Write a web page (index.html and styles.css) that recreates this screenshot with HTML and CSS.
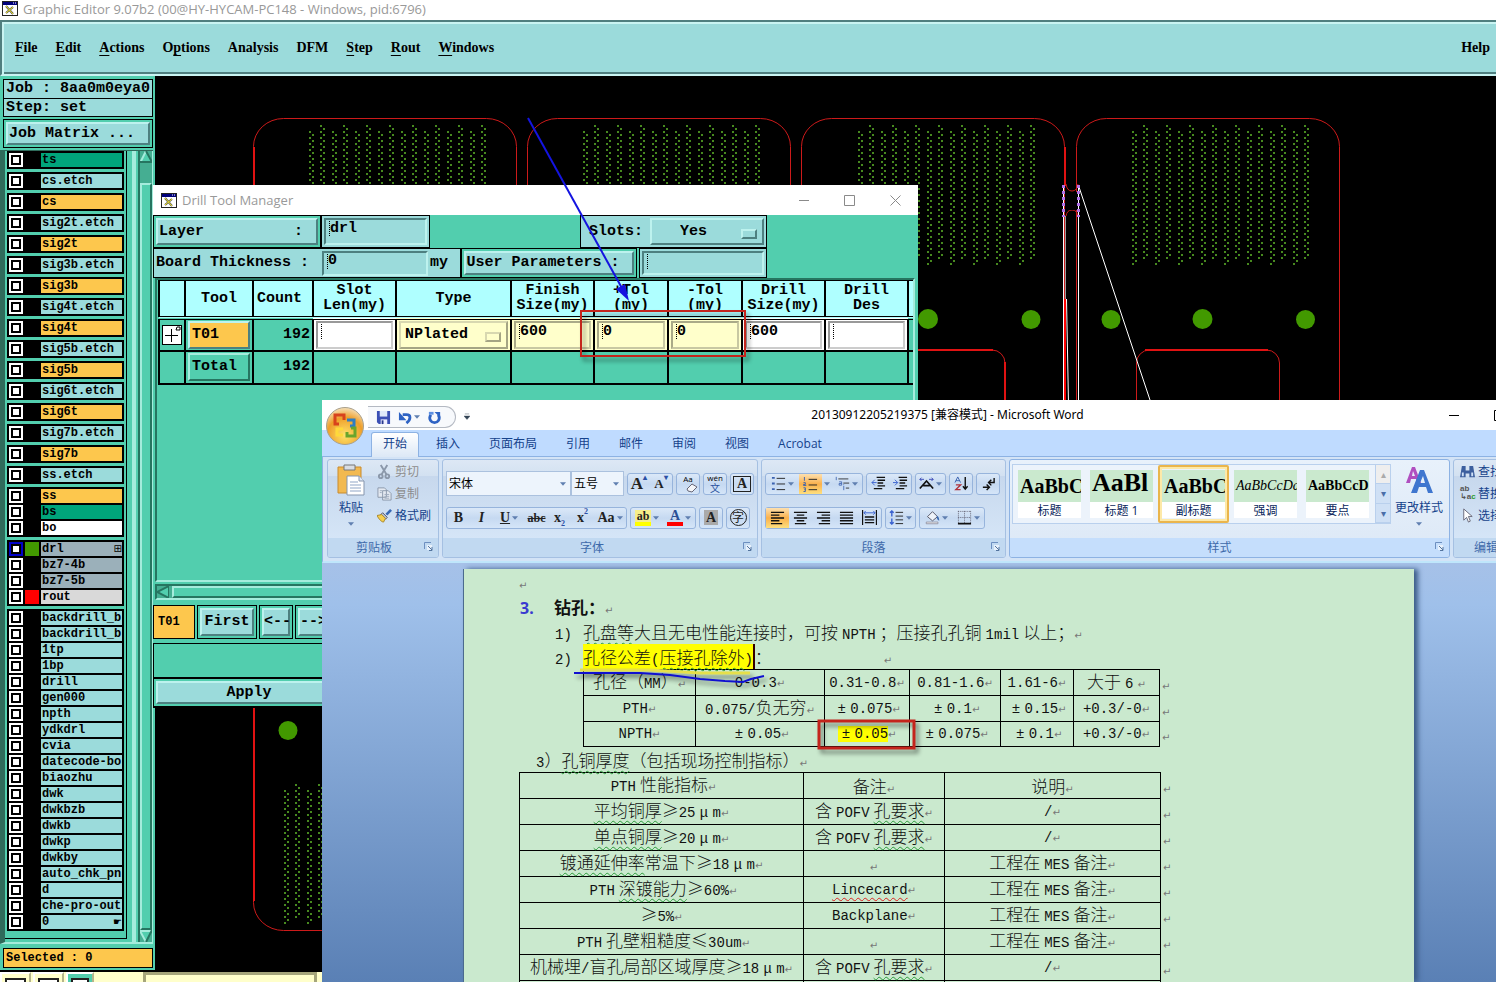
FILE: index.html
```html
<!DOCTYPE html>
<html lang="zh-CN">
<head>
  <meta charset="UTF-8" />
  <meta name="viewport" content="width=device-width, initial-scale=1.0" />
  <title>Graphic Editor</title>
  <link rel="stylesheet" href="styles.css">
</head>
<body>
  <!-- shared icons -->
  <svg class="defs" aria-hidden="true">
    <symbol id="x-icon" viewBox="0 0 16 15"><path d="M0 0h16v15H0z" fill="#222"/><path d="M1 4h14v10H1z" fill="#fff"/><path d="M1 1h14v3H1z" fill="#00007b"/><path d="M11 2h1M13 2h1" stroke="#fff"/><path d="M4 5l7 8M11 6l-7 6" stroke="#555" stroke-width="2"/><path d="M4 5l7 8M11 6l-7 6" stroke="#f5e926"/></symbol>
    <symbol id="down" viewBox="0 0 7 4"><path d="M0 0h7L3.500 4z" fill="#5f7fb0"/></symbol>
    <symbol id="launch" viewBox="0 0 9 9"><path d="M.5 7V.5H7" fill="none" stroke="#6d8fc0"/><path d="M3 3h5v5H3z" fill="#e8f1fc"/><path d="M4 4l4 4M8 5v3.500H5" fill="none" stroke="#54759f"/></symbol>
    <symbol id="save" viewBox="0 0 16 16"><path d="M1 1h14v14H3l-2-2z" fill="#3b4fb5"/><path d="M4 1h8v6H4z" fill="#dfe8fa"/><path d="M5 10h7v5H5z" fill="#eef"/><path d="M6 11h2v4H6z" fill="#28388c"/></symbol>
    <symbol id="undo" viewBox="0 0 16 16"><path d="M5 5h4c5 0 5 5 0 9" fill="none" stroke="#2e63c4" stroke-width="3"/><path d="M1 2v9h8z" fill="#2e63c4"/></symbol>
    <symbol id="redo" viewBox="0 0 16 16"><path d="M4 5C1 10 5 13.500 8 13.500s7-3.500 4-8.500" fill="none" stroke="#2e63c4" stroke-width="3"/><path d="M8 2h6v6z" fill="#2e63c4"/><path d="M2 2h5v3H2z" fill="#5d8fe0"/></symbol>
    <symbol id="paste" viewBox="0 0 28 32"><path d="M1 3h23v26H1z" fill="#f2b950" stroke="#c98a2c"/><path d="M7 1h11v5H7z" fill="#d9dde3" stroke="#777"/><path d="M10 12h12l5 5v14H10z" fill="#fff" stroke="#8595ad"/><path d="M22 12v5h5" fill="#dce6f4" stroke="#8595ad"/><path d="M13 18h8M13 21h11M13 24h11M13 27h11" stroke="#8fa5c6"/></symbol>
    <symbol id="cut" viewBox="0 0 16 16"><path d="M4 1l6 10M11 1L5 11" stroke="#8b98aa" stroke-width="2"/><circle cx="4" cy="13" r="2" fill="none" stroke="#8b98aa" stroke-width="2"/><circle cx="11" cy="13" r="2" fill="none" stroke="#8b98aa" stroke-width="2"/></symbol>
    <symbol id="copy" viewBox="0 0 16 16"><path d="M1 2h7l2 2v8H1zM6 5h6l3 3v7H6z" fill="#e4e9f1" stroke="#8b98aa"/><path d="M8 9h5M8 11h5M8 13h5M3 5h3M3 7h2" stroke="#9eabbd"/></symbol>
    <symbol id="brush" viewBox="0 0 16 16"><path d="M9 6l5-5 2 2-5 5z" fill="#3769b5"/><path d="M6 5l5 5-2 2-5-5z" fill="#b6c3d6" stroke="#556"/><path d="M0 8l5-1 4 4-2 4c-2 0-5-3-7-7z" fill="#f5cf4e" stroke="#a8862a"/></symbol>
    <symbol id="eraser" viewBox="0 0 12 10"><path d="M1 6l5-5 5 3-5 5-4-1z" fill="#f3f5f8" stroke="#667"/></symbol>
    <symbol id="bullets" viewBox="0 0 16 16"><path d="M1 2h3M1 8h3M1 14h3" stroke="#3b62b0" stroke-width="2"/><path d="M6 2.500h9M6 8.500h9M6 14.500h9" stroke="#222"/></symbol>
    <symbol id="numbers" viewBox="0 0 16 16"><path d="M1.500 0v4M.5 6h2v2h-2v1h3M.5 11.500h2v2h-1M2.500 13v2.500h-2" fill="none" stroke="#3b62b0"/><path d="M6 2.500h9M6 8.500h9M6 13.500h9" stroke="#222"/></symbol>
    <symbol id="multi" viewBox="0 0 18 16"><path d="M1.500 0v4M5 6h3v4H5V8h3M10.500 11v5M10 9.500h1" fill="none" stroke="#3b62b0"/><path d="M4 2.500h12M10 7.500h7M13 13.500h4" stroke="#222"/></symbol>
    <symbol id="outdent" viewBox="0 0 16 16"><path d="M6 1.500h9M7 4.500h8M7 7.500h6M7 10.500h8M3 13.500h9" stroke="#111" stroke-width="1.500"/><path d="M6 7H1m3-3L1 7l3 3" fill="none" stroke="#3b62d0"/></symbol>
    <symbol id="indent" viewBox="0 0 16 16"><path d="M6 1.500h9M7 4.500h8M7 7.500h6M7 10.500h8M3 13.500h9" stroke="#111" stroke-width="1.500"/><path d="M0 7h5M2 4l3 3-3 3" fill="none" stroke="#3b62d0"/></symbol>
    <symbol id="scale" viewBox="0 0 18 16"><path d="M1 14L9 5l8 9M5 10.500h8" fill="none" stroke="#111" stroke-width="2"/><path d="M1 3h5M12 3h5M3 1L1 3l2 2M15 1l2 2-2 2" fill="none" stroke="#2b38b0"/></symbol>
    <symbol id="sort" viewBox="0 0 16 16"><path d="M1 7l3-6 3 6M2 5h4" fill="none" stroke="#3b62b0"/><path d="M2 9.500h5l-5 5h5" fill="none" stroke="#b0303a" stroke-width="1.500"/><path d="M12 1v13M9.500 11l2.500 3 2.500-3" fill="none" stroke="#111" stroke-width="1.500"/></symbol>
    <symbol id="marks" viewBox="0 0 16 16"><path d="M14 2v5H8m3-3L8 7l3 3M2 12h7M6 9l3 3-3 3" fill="none" stroke="#111" stroke-width="1.500"/></symbol>
    <symbol id="left" viewBox="0 0 16 16"><path d="M1 2.500h14M1 5.500h9M1 8.500h14M1 11.500h9M1 14.500h12" stroke="#111" stroke-width="1.500"/></symbol>
    <symbol id="center" viewBox="0 0 16 16"><path d="M1 2.500h14M4 5.500h8M1 8.500h14M4 11.500h8M2 14.500h12" stroke="#111" stroke-width="1.500"/></symbol>
    <symbol id="right" viewBox="0 0 16 16"><path d="M1 2.500h14M6 5.500h9M1 8.500h14M6 11.500h9M3 14.500h12" stroke="#111" stroke-width="1.500"/></symbol>
    <symbol id="justify" viewBox="0 0 16 16"><path d="M1 2.500h14M1 5.500h14M1 8.500h14M1 11.500h14M1 14.500h14" stroke="#111" stroke-width="1.500"/></symbol>
    <symbol id="spread" viewBox="0 0 16 16"><path d="M.5 0v16M15.500 0v16M3 7.500h10M3 10.500h10M3 13.500h10" stroke="#111" stroke-width="1.500"/><path d="M2 3h12M4 1L2 3l2 2M12 1l2 2-2 2" fill="none" stroke="#3b62d0"/></symbol>
    <symbol id="spacing" viewBox="0 0 16 16"><path d="M7 2.500h8M7 6.500h8M7 10.500h8M7 14.500h8" stroke="#222"/><path d="M3 1v6M1 3l2-2 2 2M3 9v6M1 13l2 2 2-2" fill="none" stroke="#3b62d0" stroke-width="1.500"/></symbol>
    <symbol id="bucket" viewBox="0 0 18 16"><path d="M3 7l6-6 6 6-6 5z" fill="#eef3fa" stroke="#445"/><path d="M14 6c3 1 3 4 3 6-2-1-3-2-3-6z" fill="#3c6cb4"/><path d="M1.500 13.500h14v2h-14z" fill="#fff" stroke="#889"/></symbol>
    <symbol id="borders" viewBox="0 0 16 16"><path d="M1.500 1v13M8 1v13M14.500 1v13M1 1.500h14M1 8h14" stroke="#667" stroke-dasharray="1 1"/><path d="M1 14.500h14" stroke="#111" stroke-width="2"/></symbol>
    <symbol id="find" viewBox="0 0 16 16"><path d="M2 2h4v5h4V2h4l2 12h-6v-4H6v4H0z" fill="#3d5f9e"/><path d="M2 9h2v4H2zM12 9h2v4h-2z" fill="#cfe0f7"/></symbol>
    <symbol id="arrow" viewBox="0 0 16 16"><path d="M4 1v12l3-3 2 5 2-1-2-5h4z" fill="#fff" stroke="#667"/></symbol>
  </svg>

  <main class="editor">
    <header class="titlebar"><svg class="xicon"><use href="#x-icon"/></svg>Graphic Editor 9.07b2 (00@HY-HYCAM-PC148 - Windows, pid:6796)</header>
    <nav class="menubar">
      <a href="#"><u>F</u>ile</a><a href="#"><u>E</u>dit</a><a href="#"><u>A</u>ctions</a><a href="#">O<u>p</u>tions</a><a href="#">Analysis</a><a href="#">DFM</a><a href="#"><u>S</u>tep</a><a href="#"><u>R</u>out</a><a href="#"><u>W</u>indows</a>
      <a href="#" class="help">Help</a>
    </nav>
    <div class="work">
      <aside class="sidebar">
        <div class="job"><div>Job : 8aa0m0eya0</div><div>Step: set</div></div>
        <div class="frame"><button class="raised matrix">Job Matrix ...</button></div>
        <div class="layers">
          <div class="list">
            <div class="group"><label class="mask"><input type="checkbox"><i></i><span>ts</span></label></div>
            <div class="group"><label><input type="checkbox"><i></i><span>cs.etch</span></label></div>
            <div class="group"><label class="copper"><input type="checkbox"><i></i><span>cs</span></label></div>
            <div class="group"><label><input type="checkbox"><i></i><span>sig2t.etch</span></label></div>
            <div class="group"><label class="copper"><input type="checkbox"><i></i><span>sig2t</span></label></div>
            <div class="group"><label><input type="checkbox"><i></i><span>sig3b.etch</span></label></div>
            <div class="group"><label class="copper"><input type="checkbox"><i></i><span>sig3b</span></label></div>
            <div class="group"><label><input type="checkbox"><i></i><span>sig4t.etch</span></label></div>
            <div class="group"><label class="copper"><input type="checkbox"><i></i><span>sig4t</span></label></div>
            <div class="group"><label><input type="checkbox"><i></i><span>sig5b.etch</span></label></div>
            <div class="group"><label class="copper"><input type="checkbox"><i></i><span>sig5b</span></label></div>
            <div class="group"><label><input type="checkbox"><i></i><span>sig6t.etch</span></label></div>
            <div class="group"><label class="copper"><input type="checkbox"><i></i><span>sig6t</span></label></div>
            <div class="group"><label><input type="checkbox"><i></i><span>sig7b.etch</span></label></div>
            <div class="group"><label class="copper"><input type="checkbox"><i></i><span>sig7b</span></label></div>
            <div class="group"><label><input type="checkbox"><i></i><span>ss.etch</span></label></div>
            <div class="group">
              <label class="copper"><input type="checkbox"><i></i><span>ss</span></label>
              <label class="mask"><input type="checkbox"><i></i><span>bs</span></label>
              <label class="bom"><input type="checkbox"><i></i><span>bo</span></label>
            </div>
            <div class="group">
              <label class="drill"><input type="checkbox" checked><i class="green"></i><span>drl<em>⊞</em></span></label>
              <label class="drill"><input type="checkbox"><i></i><span>bz7-4b</span></label>
              <label class="drill"><input type="checkbox"><i></i><span>bz7-5b</span></label>
              <label class="rout"><input type="checkbox"><i class="red"></i><span>rout</span></label>
            </div>
            <div class="group">
              <label><input type="checkbox"><i></i><span>backdrill_b-</span></label>
              <label><input type="checkbox"><i></i><span>backdrill_b-</span></label>
              <label><input type="checkbox"><i></i><span>1tp</span></label>
              <label><input type="checkbox"><i></i><span>1bp</span></label>
              <label><input type="checkbox"><i></i><span>drill</span></label>
              <label><input type="checkbox"><i></i><span>gen000</span></label>
              <label><input type="checkbox"><i></i><span>npth</span></label>
              <label><input type="checkbox"><i></i><span>ydkdrl</span></label>
              <label><input type="checkbox"><i></i><span>cvia</span></label>
              <label><input type="checkbox"><i></i><span>datecode-bo</span></label>
              <label><input type="checkbox"><i></i><span>biaozhu</span></label>
              <label><input type="checkbox"><i></i><span>dwk</span></label>
              <label><input type="checkbox"><i></i><span>dwkbzb</span></label>
              <label><input type="checkbox"><i></i><span>dwkb</span></label>
              <label><input type="checkbox"><i></i><span>dwkp</span></label>
              <label><input type="checkbox"><i></i><span>dwkby</span></label>
              <label><input type="checkbox"><i></i><span>auto_chk_pnl</span></label>
              <label><input type="checkbox"><i></i><span>d</span></label>
              <label><input type="checkbox"><i></i><span>che-pro-out</span></label>
              <label><input type="checkbox"><i></i><span>0<em>☛</em></span></label>
            </div>
          </div>
          <div class="rail"></div>
          <div class="scroll">
            <svg viewBox="0 0 12 12"><path d="M6 0l6 12H0z" fill="#52ceae"/><path d="M6 0L0 12" stroke="#a5ecdc" stroke-width="2"/><path d="M6 0l6 11H0" fill="none" stroke="#267560" stroke-width="2"/></svg>
            <div class="thumb"></div>
            <svg viewBox="0 0 12 12"><path d="M0 0h12L6 12z" fill="#52ceae"/><path d="M12 1H0l6 11" fill="none" stroke="#a5ecdc" stroke-width="2"/><path d="M12 0L6 12" stroke="#267560" stroke-width="2"/></svg>
          </div>
        </div>
        <div class="selected">Selected : 0</div>
      </aside>

      <svg class="canvas">
        <defs>
          <pattern id="pinsA" width="23" height="6" patternUnits="userSpaceOnUse"><path d="M0 0h2v2H0zM3 3h2v2H3z" fill="#47891f"/></pattern>
          <g id="pins">
            <path d="M0 6h166v135H0z" fill="url(#pinsA)"/>
            <g transform="translate(11)"><path d="M0 0h166v135H0z" fill="url(#pinsA)"/></g>
          </g>
          <rect id="board" width="263" height="812" rx="30" ry="28"/>
        </defs>
        <!-- drawn in screen units, shifted by the sidebar and menu -->
        <g transform="translate(-155 -76)">
          <g fill="none" stroke="#cc1a1a">
            <use href="#board" x="253.500" y="118.500"/>
            <use href="#board" x="527.500" y="118.500"/>
            <use href="#board" x="801.500" y="118.500"/>
            <use href="#board" x="1076.500" y="118.500"/>
            <rect x="862" y="350" width="143" height="300" rx="13"/>
            <rect x="1136.500" y="350" width="143" height="300" rx="13"/>
            <path d="M1145 350h123M918 350h75M254 147v754M1065 147v39M1005 362v38" stroke="#e01212" stroke-width="2"/>
            <path d="M1066 184q1 7 6 7t6-7M1066 216q1-6 6-6t6 6"/>
          </g>
          <path d="M1066 192h11v18h-11z" fill="#000"/>
          <use href="#pins" transform="translate(309 125)"/>
          <use href="#pins" transform="translate(583 125)"/>
          <use href="#pins" transform="translate(858 125)"/>
          <use href="#pins" transform="translate(1132 125)"/>
          <use href="#pins" transform="translate(284 784)"/>
          <g fill="#429900">
            <circle cx="928" cy="319" r="10"/><circle cx="1031" cy="319.500" r="9.500"/><circle cx="1111" cy="319.500" r="9.500"/><circle cx="1202.500" cy="319" r="10"/><circle cx="1305.500" cy="319.500" r="9.500"/><circle cx="288" cy="730.500" r="9.500"/>
          </g>
          <g fill="none" stroke="#fff">
            <path d="M1063.500 186v220M1078.500 186v220M1079 187l71 213"/>
            <path d="M1065.500 216v83" stroke="#999"/>
            <path d="M1065 299v110" stroke="#f00" stroke-width="2"/>
            <path d="M1066.500 299l2 105"/>
            <path d="M1063.500 185v32M1078.500 185v32" stroke="#b070e8" stroke-width="3" stroke-dasharray="3 3"/>
          </g>
        </g>
      </svg>
    </div>
    <footer class="status"><button aria-label="Zoom"><i></i></button><button aria-label="Window"><i></i></button><button class="on" aria-label="Grid"><i></i></button><input aria-label="Command"></footer>
  </main>

  <section class="drillwin">
    <header class="titlebar"><svg class="xicon"><use href="#x-icon"/></svg>Drill Tool Manager
      <svg class="winbtns" viewBox="0 0 104 12"><path d="M0 6.500h10M45.500 1.500h10v10h-10zM91.500 1.500l10 10M101.500 1.500l-10 10" fill="none" stroke="#8a8a8a"/></svg>
    </header>
    <div class="drow">
      <div class="frame layer"><button class="raised">Layer<span>:</span></button></div>
      <div class="frame aqua field"><input class="sunken" value="drl" aria-label="Layer"></div>
      <div class="frame aqua slots"><label for="slots">Slots:</label><span class="opt"><select id="slots" class="raised"><option>Yes</option></select></span></div>
    </div>
    <div class="drow low">
      <div class="frame aqua thick"><label for="thick">Board Thickness :</label><input id="thick" class="sunken" value="0"><span>my</span></div>
      <div class="frame params"><button class="raised">User Parameters :</button></div>
      <div class="frame aqua pfield"><input class="sunken" aria-label="User parameters"></div>
    </div>
    <div class="toolpane">
      <table class="tools">
        <colgroup><col class="c1"><col class="c2"><col class="c3"><col class="c4"><col class="c5"><col class="c4"><col class="c6"><col class="c6"><col class="c4"><col class="c4"><col></colgroup>
        <thead><tr><th></th><th>Tool</th><th class="l">Count</th><th>Slot<br>Len(my)</th><th>Type</th><th>Finish<br>Size(my)</th><th>+Tol<br>(my)</th><th>-Tol<br>(my)</th><th>Drill<br>Size(my)</th><th>Drill<br>Des</th><th></th></tr></thead>
        <tbody>
          <tr>
            <td><button class="plus" aria-label="Expand"><svg viewBox="0 0 18 18"><path d="M8.500 3v13M2 9.500h13M13 4l1-3h3v3z" fill="none" stroke="#000"/></svg></button></td>
            <td><button class="raised copper">T01</button></td>
            <td class="r">192</td>
            <td class="white"><input class="sunken" aria-label="Slot length"></td>
            <td class="cream"><span class="opt"><select class="raised" aria-label="Type"><option>NPlated</option></select></span></td>
            <td class="cream"><input class="sunken" value="600" aria-label="Finish size"></td>
            <td class="cream"><input class="sunken" value="0" aria-label="Plus tolerance"></td>
            <td class="cream"><input class="sunken" value="0" aria-label="Minus tolerance"></td>
            <td class="white"><input class="sunken" value="600" aria-label="Drill size"></td>
            <td class="white"><input class="sunken" aria-label="Drill des"></td>
            <td></td>
          </tr>
          <tr><td></td><td><button class="raised teal">Total</button></td><td class="r">192</td><td></td><td></td><td></td><td></td><td></td><td></td><td></td><td></td></tr>
        </tbody>
      </table>
    </div>
    <div class="hscroll"><svg viewBox="0 0 12 12"><path d="M12 0v12L0 6z" fill="#52ceae" stroke="#267560" stroke-width="2"/></svg><div></div></div>
    <div class="drow nav"><div class="frame cur">T01</div><div class="frame"><button class="raised first">First</button></div><div class="frame"><button class="raised">&lt;--</button></div><div class="frame"><button class="raised">--&gt;</button></div></div>
    <div class="msg"></div>
    <div class="frame apply"><button class="raised">Apply</button></div>
  </section>

  <section class="word">
    <header class="wtitle">
      <div class="qat">
        <svg class="orb" viewBox="0 0 40 40"><defs><radialGradient id="orbfill" cx=".5" cy=".75" r=".8"><stop offset="0" stop-color="#ffe36a"/><stop offset=".6" stop-color="#ee9f2a"/><stop offset="1" stop-color="#f7ecd2"/></radialGradient></defs><circle cx="20" cy="20" r="18.500" fill="url(#orbfill)" stroke="#a9a08c"/><g fill="none" stroke-width="3"><path d="M14 18h-4V9h9v5" stroke="#d8431c"/><path d="M22 14h7v6h-4" stroke="#2d7dc4"/><path d="M18 23h-6v6h6" stroke="#ffd93a"/><path d="M26 22h4v8h-8v-4" stroke="#6aa52c"/></g></svg>
        <div class="pill"><button aria-label="保存"><svg><use href="#save"/></svg></button><button aria-label="撤消"><svg><use href="#undo"/></svg><svg class="dn"><use href="#down"/></svg></button><button aria-label="重复"><svg><use href="#redo"/></svg></button></div>
        <svg class="more" viewBox="0 0 7 7"><path d="M1 .5h5M0 3h7L3.500 7z" fill="#345" stroke="#345" stroke-width=".5"/></svg>
      </div>
      <h1>20130912205219375 [兼容模式] - Microsoft Word</h1>
      <svg class="wbtns" viewBox="0 0 65 30"><path d="M18 15.500h10M63.500 10.500h10v10h-10z" fill="none" stroke="#000"/></svg>
    </header>
    <nav class="tabs"><a href="#" class="on">开始</a><a href="#">插入</a><a href="#">页面布局</a><a href="#">引用</a><a href="#">邮件</a><a href="#">审阅</a><a href="#">视图</a><a href="#">Acrobat</a></nav>
    <div class="ribbon">
      <div class="rg clip">
        <div class="body">
          <button class="big"><svg class="i28"><use href="#paste"/></svg>粘贴<svg class="dn"><use href="#down"/></svg></button>
          <div class="stack"><button disabled><svg><use href="#cut"/></svg>剪切</button><button disabled><svg><use href="#copy"/></svg>复制</button><button><svg><use href="#brush"/></svg>格式刷</button></div>
        </div>
        <h2>剪贴板<svg><use href="#launch"/></svg></h2>
      </div>
      <div class="rg font">
        <div class="body rows">
          <div class="line">
            <span class="combo name"><select aria-label="字体"><option>宋体</option></select><svg class="dn"><use href="#down"/></svg></span><span class="combo"><select aria-label="字号"><option>五号</option></select><svg class="dn"><use href="#down"/></svg></span>
            <div class="tb"><button class="s16">A<sup>▴</sup></button><button class="s13">A<sup>▾</sup></button></div>
            <div class="tb"><button class="clear" aria-label="清除格式"><small>Aa</small><svg><use href="#eraser"/></svg></button></div>
            <div class="tb"><button class="pinyin"><small>wén</small><span>文</span></button></div>
            <div class="tb"><button class="s13"><span class="boxed">A</span></button></div>
          </div>
          <div class="line">
            <div class="tb wide"><button>B</button><button><i>I</i></button><button class="dd"><u>U</u><svg class="dn"><use href="#down"/></svg></button><button class="s12"><s>abc</s></button><button>x<sub>2</sub></button><button>x<sup>2</sup></button><button class="dd">Aa<svg class="dn"><use href="#down"/></svg></button></div>
            <div class="tb"><button class="dd s12"><span class="mark">ab</span><svg class="dn"><use href="#down"/></svg></button><button class="dd"><span class="fcolor">A</span><svg class="dn"><use href="#down"/></svg></button></div>
            <div class="tb"><button><span class="shade">A</span></button></div>
            <div class="tb"><button><span class="ring">字</span></button></div>
          </div>
        </div>
        <h2>字体<svg><use href="#launch"/></svg></h2>
      </div>
      <div class="rg para">
        <div class="body rows">
          <div class="line">
            <div class="tb"><button class="dd" aria-label="项目符号"><svg><use href="#bullets"/></svg><svg class="dn"><use href="#down"/></svg></button><button class="dd" aria-label="编号"><span class="hot"><svg><use href="#numbers"/></svg></span><svg class="dn"><use href="#down"/></svg></button><button class="dd" aria-label="多级列表"><svg><use href="#multi"/></svg><svg class="dn"><use href="#down"/></svg></button></div>
            <div class="tb"><button aria-label="减少缩进"><svg><use href="#outdent"/></svg></button><button aria-label="增加缩进"><svg><use href="#indent"/></svg></button></div>
            <div class="tb"><button class="dd" aria-label="中文版式"><svg><use href="#scale"/></svg><svg class="dn"><use href="#down"/></svg></button></div>
            <div class="tb"><button aria-label="排序"><svg><use href="#sort"/></svg></button></div>
            <div class="tb"><button aria-label="显示标记"><svg><use href="#marks"/></svg></button></div>
          </div>
          <div class="line">
            <div class="tb wide"><button class="hot" aria-label="左对齐"><svg><use href="#left"/></svg></button><button aria-label="居中"><svg><use href="#center"/></svg></button><button aria-label="右对齐"><svg><use href="#right"/></svg></button><button aria-label="两端对齐"><svg><use href="#justify"/></svg></button><button aria-label="分散对齐"><svg><use href="#spread"/></svg></button></div>
            <div class="tb"><button class="dd" aria-label="行距"><svg><use href="#spacing"/></svg><svg class="dn"><use href="#down"/></svg></button></div>
            <div class="tb"><button class="dd" aria-label="底纹"><svg><use href="#bucket"/></svg><svg class="dn"><use href="#down"/></svg></button><button class="dd" aria-label="框线"><svg><use href="#borders"/></svg><svg class="dn"><use href="#down"/></svg></button></div>
          </div>
        </div>
        <h2>段落<svg><use href="#launch"/></svg></h2>
      </div>
      <div class="rg styles">
        <div class="body">
          <div class="gallery">
            <button><b>AaBbC</b>标题</button>
            <button><b class="h">AaBl</b>标题 1</button>
            <button class="sel"><b>AaBbC</b>副标题</button>
            <button><b class="em">AaBbCcDd</b>强调</button>
            <button><b class="sm">AaBbCcD</b>要点</button>
            <div class="gscroll"><button aria-label="上" disabled>▴</button><button aria-label="下">▾</button><button aria-label="更多">▾</button></div>
          </div>
          <button class="big change"><svg class="i28" viewBox="0 0 28 28"><path d="M1 17L7 1h3l6 16h-4l-1-4H6l-1 4zM7 10h3L8 5z" fill="#b04fc0"/><path d="M6 27L15 4h4l9 23h-5l-2-6h-7l-2 6zM15 17h5l-2-7z" fill="#3f76cf"/></svg>更改样式<svg class="dn"><use href="#down"/></svg></button>
        </div>
        <h2>样式<svg><use href="#launch"/></svg></h2>
      </div>
      <div class="rg edit">
        <div class="body"><div class="stack"><button><svg><use href="#find"/></svg>查找</button><button><span class="abac">ab<br>↳a<b>c</b></span>替换</button><button><svg><use href="#arrow"/></svg>选择</button></div></div>
        <h2>编辑</h2>
      </div>
    </div>

    <div class="desk">
      <article class="page">
        <p class="ret"></p>
        <p class="ret head"><span>3.</span><strong>钻孔：</strong></p>
        <p class="ret item"><span class="en">1)</span><span class="gw">孔盘等</span>大且无电性能连接时，可按<span class="en sp">NPTH</span>；压接孔孔铜<span class="en sp">1mil</span>以上；</p>
        <p class="ret item far"><span class="en">2)</span><mark>孔径公差<span class="en">(</span><span class="gw">压接孔除外</span><span class="en">)</span></mark>：</p>
        <table class="tol">
          <colgroup><col class="t1"><col class="t2"><col class="t3"><col class="t4"><col class="t5"><col class="t6"><col></colgroup>
          <tr><td>孔径（<span class="en">MM</span>）</td><td class="en">0-0.3</td><td class="en">0.31-0.8</td><td class="en">0.81-1.6</td><td class="en">1.61-6</td><td>大于<span class="en sp">6</span></td><td></td></tr>
          <tr><td class="en">PTH</td><td><span class="en">0.075/</span>负无穷</td><td class="en"><b>±</b>0.075</td><td class="en"><b>±</b>0.1</td><td class="en"><b>±</b>0.15</td><td class="en">+0.3/-0</td><td></td></tr>
          <tr><td class="en">NPTH</td><td class="en"><b>±</b>0.05</td><td class="en"><mark><b>±</b>0.05</mark></td><td class="en"><b>±</b>0.075</td><td class="en"><b>±</b>0.1</td><td class="en">+0.3/-0</td><td></td></tr>
        </table>
        <p class="ret sub"><span class="en">3</span>）<span class="gw">孔铜厚度</span>（包括现场控制指标）</p>
        <table class="spec">
          <colgroup><col class="s1"><col class="s2"><col class="s3"><col></colgroup>
          <tr><td><span class="en sp">PTH</span>性能指标</td><td>备注</td><td>说明</td><td></td></tr>
          <tr><td><span class="gw">平均铜厚</span>≥<span class="en">25<b>μ</b>m</span></td><td>含<span class="en sp">POFV</span><span class="gw">孔要求</span></td><td class="en">/</td><td></td></tr>
          <tr><td><span class="gw">单点铜厚</span>≥<span class="en">20<b>μ</b>m</span></td><td>含<span class="en sp">POFV</span><span class="gw">孔要求</span></td><td class="en">/</td><td></td></tr>
          <tr><td><span class="gw">镀通延伸率</span>常温下≥<span class="en">18<b>μ</b>m</span></td><td></td><td>工程在<span class="en sp">MES</span>备注</td><td></td></tr>
          <tr><td><span class="en sp">PTH</span><span class="gw">深镀能力</span>≥<span class="en">60%</span></td><td class="en"><span class="rw">Lincecard</span></td><td>工程在<span class="en sp">MES</span>备注</td><td></td></tr>
          <tr><td>≥<span class="en">5%</span></td><td class="en">Backplane</td><td>工程在<span class="en sp">MES</span>备注</td><td></td></tr>
          <tr><td><span class="en sp">PTH</span>孔壁粗糙度≤<span class="en">30um</span></td><td></td><td>工程在<span class="en sp">MES</span>备注</td><td></td></tr>
          <tr><td>机械埋<span class="en">/</span>盲孔局部区域厚度≥<span class="en">18<b>μ</b>m</span></td><td>含<span class="en sp">POFV</span><span class="gw">孔要求</span></td><td class="en">/</td><td></td></tr>
          <tr class="next"><td></td><td></td><td></td><td></td></tr>
        </table>
      </article>
    </div>
  </section>

  <!-- pen marks over both windows -->
  <svg class="ink" aria-hidden="true">
    <path d="M528 118l95 172" stroke="#1414e0" stroke-width="2"/>
    <path d="M616 289l9-5 4 17z" fill="#1414e0"/>
    <g fill="none" class="drop">
      <path d="M581 311h164v45H581z" stroke="#c4241c" stroke-width="2"/>
      <path d="M819 721h95v27h-95z" stroke="#c4241c" stroke-width="3"/>
      <path d="M580 670h70l50 3h50" stroke="#e6e04a" stroke-width="3"/>
      <path d="M574 673h66l30 2 30 4 25 2 18 1 8-3 13-3" stroke="#1010d0" stroke-width="2"/>
    </g>
  </svg>
</body>
</html>
```
FILE: styles.css
```css
:root {
  --teal: #52ceae;
  --aqua: #9bdbdb;
  --copper: #fdc74d;
  --lite: #bdf2ee;
  --dark: #4d8080;
  --mono: "Liberation Mono", "Courier New", monospace;
  --ui: "Open Sans", "Noto Sans CJK SC", sans-serif;
}
* { box-sizing: border-box; }
body {
  margin: 0;
  height: 100vh;
  overflow: hidden;
  position: relative;
  background: #000;
  font-family: var(--ui);
  font-size: 12px;
}
button, input, select { font: inherit; color: inherit; margin: 0; border-radius: 0; }
button { border: 0; background: none; padding: 0; }
select { appearance: none; }
a { color: inherit; text-decoration: none; }
.defs { position: absolute; width: 0; height: 0; }

/* graphic editor */
.editor { height: 100%; display: flex; flex-direction: column; }
.titlebar {
  display: flex;
  align-items: center;
  height: 20px;
  padding-left: 2px;
  background: #fff;
  color: #999;
  font-size: 13px;
  line-height: 16px;
  white-space: nowrap;
}
.xicon { width: 16px; height: 15px; margin-right: 5px; }
.editor > .titlebar { padding-bottom: 3px; }
.menubar {
  display: flex;
  gap: 18px;
  height: 56px;
  padding: 17px 2px 0 13px;
  background: var(--aqua);
  border: 2px solid;
  border-color: #4f7f7f #4f7f7f #c9f4f2 #4f7f7f;
  border-right: 0;
  box-shadow: inset 2px 2px #c9f4f2, inset 0 -2px #4f7f7f;
  font: bold 14px/18px "Liberation Serif", serif;
  color: #000;
}
.menubar u { text-underline-offset: 3px; }
.menubar .help { margin-left: auto; margin-right: 4px; }
.work { flex: 1; min-height: 0; display: flex; }
.canvas { flex: 1; height: 100%; background: #000; }

.frame { border: 1px solid #000; padding: 2px; background: var(--teal); }
.aqua { background: var(--aqua); }
.raised {
  border: 2px solid;
  border-color: var(--lite) var(--dark) var(--dark) var(--lite);
  background: var(--aqua);
}
.sunken {
  border: 2px solid;
  border-color: var(--dark) var(--lite) var(--lite) var(--dark);
  padding: 0 0 6px 4px;
  min-width: 0;
  background: repeating-linear-gradient(#000 0 1px, transparent 1px 2px) 3px 1px / 1px 15px no-repeat;
}

.sidebar {
  width: 155px;
  flex: none;
  display: flex;
  flex-direction: column;
  padding: 3px 2px 2px 3px;
  background: var(--teal);
  font: bold 15px/17px var(--mono);
}
.job { border: 1px solid #000; background: var(--aqua); height: 38px; margin-bottom: 2px; }
.job div { padding-left: 2px; height: 18px; white-space: nowrap; }
.job div + div { border-top: 1px solid #000; }
.matrix { width: 100%; height: 23px; text-align: left; line-height: 16px; padding-left: 1px; }
.layers {
  flex: 1;
  min-height: 0;
  display: flex;
  margin: 2px 0 4px -3px;
  border-left: 5px solid #2f6b5b;
  border-top: 1px solid #2f6b5b;
  border-bottom: 2px solid #a5ecdc;
}
.list {
  width: 122px;
  display: flex;
  flex-direction: column;
  gap: 3px;
  padding: 0 2px;
  margin-bottom: 3px;
  border-right: 1px solid #000;
  border-bottom: 1px solid #000;
  font-size: 12px;
  line-height: 14px;
}
.group { display: flex; flex-direction: column; gap: 2px; padding: 2px; background: #000; width: 117px; }
.group label { display: flex; gap: 2px; height: 14px; }
.group input {
  appearance: none;
  width: 14px;
  height: 14px;
  flex: none;
  border: 2px solid #fff;
  background: #fff;
  box-shadow: inset 0 0 0 2px #000;
}
.group input:checked { border-color: #0000c8; }
.group i { width: 14px; flex: none; }
.green { background: #429900; }
.red { background: #f00; }
.group span { flex: 1; display: flex; justify-content: space-between; overflow: hidden; padding-left: 1px; background: var(--aqua); white-space: nowrap; }
.group em { font: 10px/14px "DejaVu Sans", sans-serif; }
.mask span { background: #00a57b; }
.group .copper span, .raised.copper { background: var(--copper); }
.bom span { background: #fff; }
.group .mask span { background: #00a57b; }
.group .bom span { background: #fff; }
.group .drill span { background: #9bb0ba; }
.group .rout span { background: #d9d9d9; }
.rail { width: 7px; margin-left: 2px; border-right: 4px solid #a5ecdc; }
.scroll {
  width: 15px;
  margin-left: auto;
  display: flex;
  flex-direction: column;
  border-left: 2px solid #267560;
  border-right: 1px solid #a5ecdc;
  background: #45ae92;
}
.scroll svg { width: 12px; height: 12px; flex: none; }
.thumb { flex: 1; margin-top: 20px; background: var(--teal); border: 2px solid; border-color: #a5ecdc #267560 #267560 #a5ecdc; }
.selected { border: 1px solid #000; height: 20px; padding-left: 2px; background: var(--copper); font-size: 12px; line-height: 19px; }
.status { display: flex; height: 12px; border-top: 2px solid #000; background: #ffffcb; gap: 2px; width: 322px; overflow: hidden; }
.status button { width: 31px; height: 22px; border: 2px solid; border-color: #fff #b5b58c #b5b58c #fff; flex: none; padding: 3px 3px 0; }
.status i { display: block; height: 14px; border: 2px solid #222; background: #fff; }
.status .on { width: 28px; background: var(--teal); }
.status input { width: 174px; margin-left: auto; margin-right: 5px; height: 22px; border: 3px solid #a5a57b; background: none; }

/* drill tool manager */
.drillwin {
  position: absolute;
  left: 153px;
  top: 185px;
  width: 765px;
  background: var(--teal);
  border-bottom: 1px solid #000;
  font: bold 15px/16px var(--mono);
}
.drillwin .titlebar { height: 30px; padding-left: 8px; font-family: var(--ui); font-weight: normal; }
.winbtns { width: 104px; height: 12px; margin-left: auto; margin-right: 15px; }
.drow { display: flex; height: 33px; }
.drow.low { height: 30px; }
.drow .frame { display: flex; }
.drow .raised, .drow .sunken { flex: 1; min-width: 0; padding-left: 4px; }
.layer { width: 168px; }
.drow .layer .raised { display: flex; justify-content: space-between; align-items: center; padding: 0 13px 0 1px; }
.field { width: 109px; }
.slots { width: 187px; margin-left: auto; margin-right: 151px; align-items: center; }
.slots label { padding: 0 7px 0 6px; }
.opt { position: relative; display: flex; flex: 1; height: 100%; }
.opt::after {
  content: "";
  position: absolute;
  right: 7px;
  top: 11px;
  width: 12px;
  height: 6px;
  border: 2px solid;
  border-color: var(--lite) var(--dark) var(--dark) var(--lite);
}
.opt select { flex: 1; min-width: 0; padding: 0 4px; }
.drow .slots select { padding-left: 28px; }
.thick { width: 308px; align-items: center; }
.thick label { width: 166px; white-space: nowrap; }
.drow .thick .sunken { flex: none; width: 106px; height: 25px; }
.thick span { padding-left: 2px; }
.params { width: 176px; }
.drow .params .raised { padding: 0 12px 0 0; white-space: nowrap; }
.pfield { width: 128px; margin-left: 2px; }
.toolpane {
  height: 304px;
  margin: 0 3px 0 2px;
  padding-left: 1px;
  overflow: hidden;
  border: 2px solid;
  border-color: #267560 #a5ecdc #a5ecdc #267560;
}
.tools { width: 765px; table-layout: fixed; border-collapse: collapse; }
.c1 { width: 26px; } .c2 { width: 68px; } .c3 { width: 60px; } .c4 { width: 83px; } .c5 { width: 115px; } .c6 { width: 74px; }
.tools th { height: 37px; padding: 0; background: #afffff; border: 2px solid #000; border-top-width: 1px; border-bottom: 4px double #000; line-height: 15px; }
.tools td { height: 33px; padding: 1px 2px; border: 2px solid #000; }
.tools .l { text-align: left; padding-left: 3px; }
.tools .r { text-align: right; }
.tools td .sunken, .tools td .raised { display: block; width: 100%; height: 28px; }
.tools button.raised { text-align: left; padding-left: 2px; }
.raised.teal { background: var(--teal); border-color: #a5ecdc #267560 #267560 #a5ecdc; }
.white { background: #fff; }
.white .sunken { border-color: #999 #ccc #ccc #999; }
.cream { background: #ffffcb; }
.cream .sunken { border-color: #aaaa88 #c8c8a2 #c8c8a2 #aaaa88; }
.cream .raised { background: #ffffcb; border-color: #d8d8b0 #a5a584 #a5a584 #d8d8b0; }
.cream .opt::after { border-color: #d8d8b0 #a5a584 #a5a584 #d8d8b0; }
.plus { display: block; width: 20px; height: 20px; background: #fff; border: 1px solid #000; }
.plus svg { display: block; width: 18px; height: 18px; }
.hscroll { display: flex; height: 16px; margin: 2px 3px 5px 2px; border: 2px solid; border-color: #267560 #a5ecdc #a5ecdc #267560; background: #45ae92; }
.hscroll svg { width: 12px; height: 12px; margin-right: 3px; }
.hscroll div { flex: 1; background: var(--teal); border: 2px solid; border-color: #a5ecdc #267560 #267560 #a5ecdc; }
.nav { height: 34px; gap: 2px; }
.nav .frame { width: 34px; }
.drow.nav .raised { padding: 0; white-space: nowrap; }
.nav .frame.cur { width: 42px; padding-left: 4px; background: var(--copper); align-items: center; font-size: 12px; }
.nav .frame:nth-child(2) { width: 60px; }
.msg { height: 35px; margin-top: 4px; border: 1px solid #000; }
.apply { width: 192px; height: 29px; display: flex; }
.apply .raised { flex: 1; }

/* word */
.word { position: absolute; left: 322px; right: 0; top: 400px; bottom: 0; display: flex; flex-direction: column; overflow: hidden; background: #bfdbff; color: #15428b; }
.wtitle { display: flex; height: 30px; background: #fff; flex: none; }
.qat { position: relative; width: 150px; padding: 6px 0 0 46px; display: flex; gap: 8px; }
.orb { position: absolute; left: 3px; top: 6px; width: 40px; height: 40px; z-index: 1; }
.pill { display: flex; align-items: center; gap: 7px; width: 88px; height: 22px; padding-left: 8px; border: 1px solid #b4b9c2; border-left: 0; border-radius: 0 11px 11px 0; background: #f7f9fc; }
.pill button { display: flex; align-items: center; gap: 1px; }
.pill svg { width: 15px; height: 15px; display: block; }
svg.dn, .pill svg.dn { width: 6px; height: 4px; flex: none; }
.more { width: 6px; height: 7px; margin-top: 7px; }
.wtitle h1 { flex: 1; margin: 0; padding-right: 8px; text-align: center; font: 12px/30px "Noto Sans", "Noto Sans CJK SC", sans-serif; color: #000; white-space: nowrap; }
.wbtns { width: 65px; height: 30px; }
.tabs { display: flex; gap: 5px; height: 27px; padding: 2px 0 0 49px; flex: none; border-bottom: 1px solid #8db2e3; line-height: 24px; }
.tabs a { padding: 0 12px; height: 25px; }
.tabs .on { background: linear-gradient(#fff, #dce8f6); border: 1px solid #8db2e3; border-bottom: 0; border-radius: 3px 3px 0 0; padding: 0 11px; line-height: 22px; }
.ribbon { display: flex; gap: 3px; height: 106px; flex: none; padding: 2px 0 3px 4px; background: #d3e3f6; border-left: 1px solid #8db2e3; border-bottom: 2px solid #bfe6fb; overflow: hidden; }
.rg { flex: none; display: flex; flex-direction: column; border: 1px solid #a5c0e2; border-radius: 3px; background: linear-gradient(#dde8f5, #d3e1f1 16%, #c7d8ed 17%, #d9e9fa); overflow: hidden; }
.rg .body { flex: 1; display: flex; }
.rg h2 { position: relative; margin: 0; height: 19px; background: #c1d9f1; font: 12px/20px var(--ui); color: #3e6aaa; text-align: center; }
.rg h2 svg { position: absolute; right: 5px; top: 4px; width: 9px; height: 9px; }
.clip { width: 112px; } .font { width: 316px; } .para { width: 245px; } .styles { width: 441px; } .edit { width: 90px; }
.clip h2 { padding-right: 18px; }
.font h2 { padding-right: 16px; }
.para h2, .styles h2 { padding-right: 20px; }
.edit h2 { text-align: left; padding-left: 20px; }
.big { display: flex; flex-direction: column; align-items: center; width: 46px; padding-top: 4px; line-height: 24px; color: #15428b; }
.i28 { width: 28px; height: 32px; flex: none; }
.big .dn { margin-top: 2px; }
.stack { display: flex; flex-direction: column; padding-left: 3px; }
.stack button { display: flex; align-items: center; gap: 3px; height: 22px; white-space: nowrap; color: #15428b; }
.stack button:disabled { color: #8d8d8d; }
.stack svg { width: 15px; height: 15px; }
.body.rows { flex-direction: column; gap: 9px; padding: 11px 0 0 3px; }
.line { display: flex; align-items: center; gap: 3px; height: 25px; }
.combo { display: flex; align-items: center; width: 53px; height: 25px; background: #edf4fc; border: 1px solid #abc1de; padding-right: 4px; }
.combo.name { width: 125px; margin-right: -3px; }
.combo select { flex: 1; min-width: 0; border: 0; background: none; padding: 0 2px; color: #000; }
.tb { display: flex; height: 22px; border: 1px solid #97b4dc; border-radius: 3px; background: linear-gradient(#dbe8f8, #c6d9f1 50%, #d5e5f8); }
.tb button { display: flex; align-items: center; justify-content: center; width: 22px; height: 20px; font: bold 14px/18px "Liberation Serif", "Noto Sans CJK SC", serif; color: #222; white-space: nowrap; }
.tb.wide button { width: 23px; }
.tb .dd, .tb.wide .dd { width: 32px; gap: 2px; }
.tb .dd:only-child { width: 29px; }
.tb button svg { width: 15px; height: 15px; display: block; }
.tb button svg.dn { width: 6px; height: 4px; }
.tb sup, .tb sub { font-size: 8px; line-height: 8px; color: #2b4fa5; }
.tb sup { align-self: flex-start; }
.tb sub { align-self: flex-end; }
.tb .s16 { font-size: 17px; }
.tb .s13 { font-size: 13px; }
.tb .s12 { font-size: 12px; }
.hot { background: linear-gradient(#fde0b0, #fbb14c 50%, #fedf7e); }
span.hot { padding: 3px 4px 2px; }
.tb .pinyin, .tb .clear { flex-direction: column; }
.pinyin span { font: 10px/11px "Noto Sans CJK SC", sans-serif; color: #2a52a0; }
.pinyin small, .clear small { font: 8px/8px var(--ui); color: #000; }
.tb .clear svg { width: 14px; height: 10px; align-self: flex-end; }
.boxed { border: 1px solid #222; line-height: 14px; padding: 0 3px; font-size: 14px; }
.mark { background: #f6ee8a; border-bottom: 4px solid #ff0; line-height: 12px; padding: 0 2px; }
.fcolor { border-bottom: 4px solid #f00; line-height: 12px; padding: 0 3px; color: #2b4f95; }
.shade { background: #aaa; line-height: 15px; padding: 0 2px; }
.ring { border: 1px solid #222; border-radius: 50%; width: 17px; height: 17px; font: 12px/15px var(--ui); text-align: center; }
.styles { background: linear-gradient(#e8f1fb, #dce8f6); border-color: #8db2e3; }
.styles h2 { background: #c5defc; }
.styles .body { padding-left: 2px; }
.gallery { display: flex; gap: 1px; width: 379px; height: 60px; margin-top: 4px; padding-left: 1px; border: 1px solid #b9d0ed; background: #ecf3fb; color: #0a1f5c; }
.gallery > button { width: 71px; height: 58px; padding: 4px 3px; line-height: 18px; border: 1px solid transparent; white-space: nowrap; background: #fff content-box; }
.gallery b { display: block; height: 32px; background: #cae9ce; color: #000; font: bold 20px/32px "Liberation Serif", serif; overflow: hidden; text-align: left; padding-left: 2px; }
.gallery b.h { font-size: 26px; line-height: 26px; }
.gallery b.em { font: italic 14px/32px "Liberation Serif", serif; }
.gallery b.sm { font-size: 14px; }
.gallery > .sel { border: 2px solid #eab54c; padding: 3px 2px; border-radius: 2px; box-shadow: inset 0 0 0 2px #fde9a8; }
.gscroll { display: flex; flex-direction: column; width: 15px; margin-left: auto; border-left: 1px solid #b9d0ed; }
.gscroll button { flex: 1; color: #4a6ea8; background: #cfe0f5; border-bottom: 1px solid #b9d0ed; font-size: 10px; line-height: 12px; }
.gscroll button:disabled { background: #eee; color: #aaa; }
.change { width: 56px; white-space: nowrap; }
.abac { font: bold 8px/8px "Liberation Sans", "DejaVu Sans", sans-serif; color: #555; width: 15px; text-align: left; }
.abac b { color: #2c9a2c; }
.edit .stack { padding-left: 6px; }

.desk { flex: 1; min-height: 0; display: flex; padding: 6px 82px 0 141px; background: linear-gradient(#a6c1e8, #9fc0ea 10%, #5a80b5); }
.page { flex: 1; background: #cae9ce; border-left: 1px solid #4b6a8e; padding-left: 55px; box-shadow: 4px 0 5px #3b5c88; color: #111; font: 300 17px/25px "Noto Sans CJK SC", sans-serif; overflow: hidden; }
.page p { margin: 0; height: 25px; white-space: nowrap; }
.page .en { font-family: var(--mono); font-size: 14px; font-weight: normal; white-space: pre; }
.page .en b { font-weight: 300; display: inline-block; width: 17px; text-align: center; }
.page .sp { margin: 0 4px; }
.ret::after, .page td::after { content: "↵"; font: 10px/10px "DejaVu Sans", sans-serif; color: #777; }
.head span { display: inline-block; width: 35px; color: #3a3ad0; font: bold 16px/25px "Noto Sans", sans-serif; padding-left: 1px; }
.head strong { font-weight: 700; font-size: 17px; }
.item { padding-left: 36px; }
.item > .en:first-child { display: inline-block; width: 28px; }
.far::after { margin-left: 112px; }
.sub { padding-left: 17px; }
.gw { text-decoration: underline wavy #2a9a3a 1px; text-underline-offset: 3px; text-decoration-skip-ink: none; }
.rw { text-decoration: underline wavy #d22 1px; text-underline-offset: 3px; text-decoration-skip-ink: none; }
mark { background: #ff0; color: inherit; }
.item mark { display: inline-block; height: 25px; border-right: 2px solid #300; }
.page table { table-layout: fixed; border-collapse: collapse; }
.page td { height: 26px; padding: 0; border: 1px solid #000; text-align: center; line-height: 22px; white-space: nowrap; }
.page td:last-child { border: 0; text-align: left; padding-left: 2px; }
.tol { width: 589px; margin-left: 64px; }
.tol tr:last-child td { height: 25px; }
.t1 { width: 112px; } .t2 { width: 129px; } .t3 { width: 85px; } .t4 { width: 91px; } .t5 { width: 73px; } .t6 { width: 86px; }
.spec { width: 654px; }
.spec tr:nth-child(3n) td { height: 25px; }
.spec .next td::after { content: none; }
.s1 { width: 284px; } .s2 { width: 141px; } .s3 { width: 216px; }

.ink { position: absolute; left: 0; top: 0; width: 100%; height: 100%; pointer-events: none; }
.drop { filter: drop-shadow(3px 4px 2px rgba(0, 0, 0, .45)); }
```
